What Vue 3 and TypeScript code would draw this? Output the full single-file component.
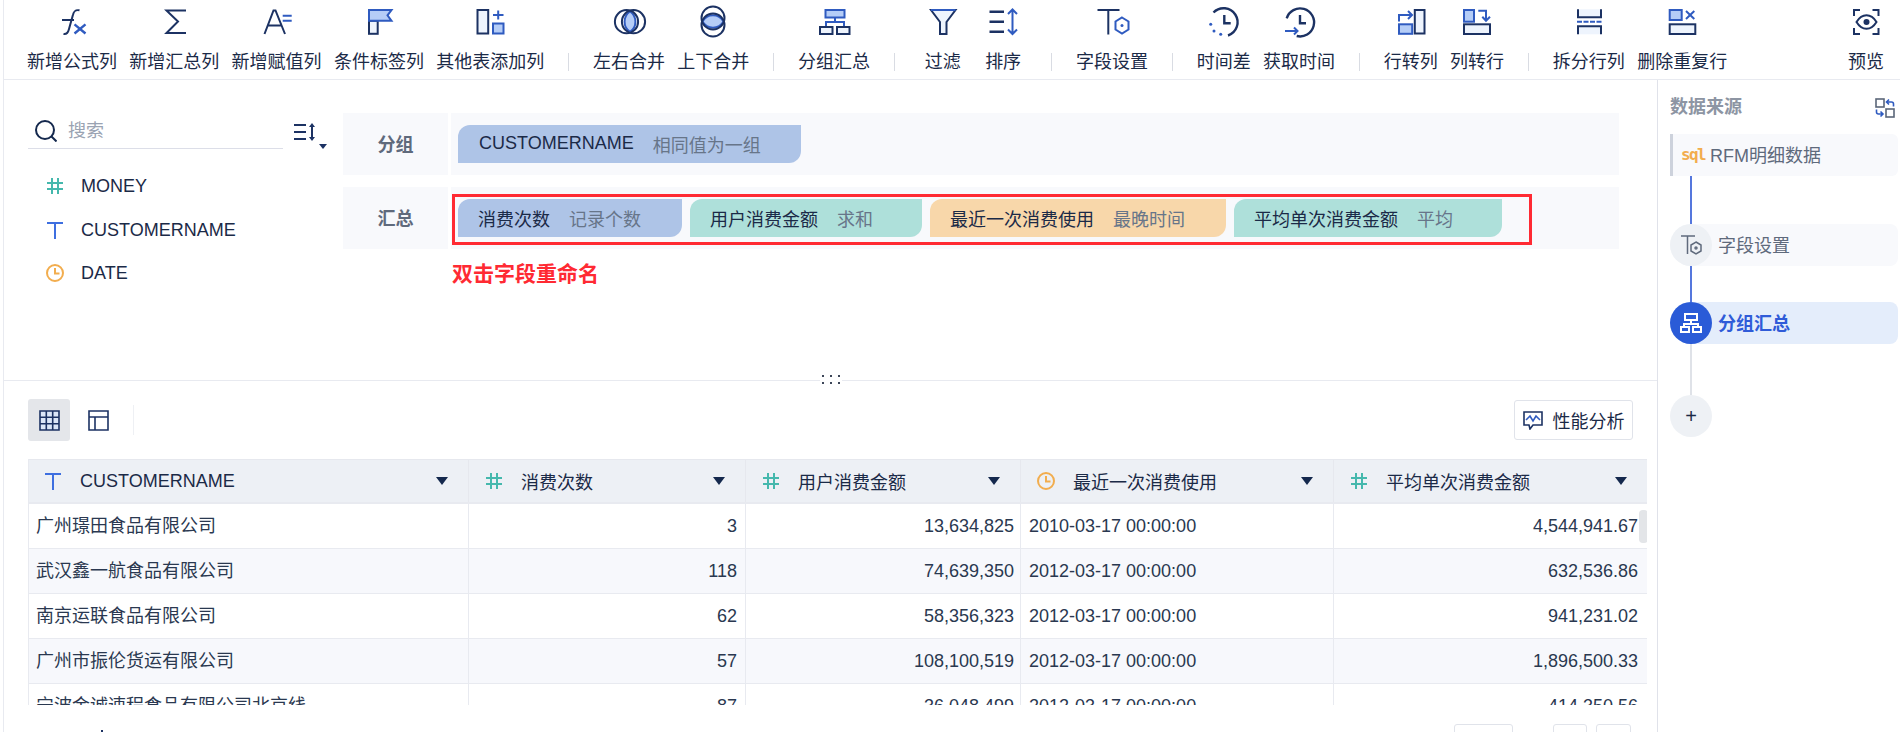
<script setup lang="ts">
interface Tool { label: string; icon: string; pad?: boolean }
type Entry = Tool | 'sep'
const tools: Entry[] = [
  { label: '新增公式列', icon: 'fx' }, { label: '新增汇总列', icon: 'sum' }, { label: '新增赋值列', icon: 'assign' },
  { label: '条件标签列', icon: 'flag' }, { label: '其他表添加列', icon: 'addcol' }, 'sep',
  { label: '左右合并', icon: 'lr' }, { label: '上下合并', icon: 'ud' }, 'sep',
  { label: '分组汇总', icon: 'group' }, 'sep',
  { label: '过滤', icon: 'filter', pad: true }, { label: '排序', icon: 'sort', pad: true }, 'sep',
  { label: '字段设置', icon: 'field' }, 'sep',
  { label: '时间差', icon: 'tdiff' }, { label: '获取时间', icon: 'tget' }, 'sep',
  { label: '行转列', icon: 'r2c' }, { label: '列转行', icon: 'c2r' }, 'sep',
  { label: '拆分行列', icon: 'split' }, { label: '删除重复行', icon: 'dedup' },
]
const isTool = (e: Entry): e is Tool => e !== 'sep'
const fields = [
  { t: 'num', n: 'MONEY' }, { t: 'txt', n: 'CUSTOMERNAME' }, { t: 'time', n: 'DATE' },
]
const pills = [
  { a: '消费次数', b: '记录个数', c: 'blue' }, { a: '用户消费金额', b: '求和', c: 'green' },
  { a: '最近一次消费使用', b: '最晚时间', c: 'orange' }, { a: '平均单次消费金额', b: '平均', c: 'green' },
]
const cols = [
  { t: 'txt', n: 'CUSTOMERNAME', w: 440 }, { t: 'num', n: '消费次数', w: 277 }, { t: 'num', n: '用户消费金额', w: 275 },
  { t: 'time', n: '最近一次消费使用', w: 313 }, { t: 'num', n: '平均单次消费金额', w: 314 },
]
const rows = [
  ['广州璟田食品有限公司', '3', '13,634,825', '2010-03-17 00:00:00', '4,544,941.67'],
  ['武汉鑫一航食品有限公司', '118', '74,639,350', '2012-03-17 00:00:00', '632,536.86'],
  ['南京运联食品有限公司', '62', '58,356,323', '2012-03-17 00:00:00', '941,231.02'],
  ['广州市振伦货运有限公司', '57', '108,100,519', '2012-03-17 00:00:00', '1,896,500.33'],
  ['宁波金诚速程食品有限公司北京线', '87', '36,048,499', '2012-03-17 00:00:00', '414,350.56'],
]
</script>

<template>
  <div class="page">
    <header class="toolbar">
      <template v-for="(e, i) in tools" :key="i">
        <div v-if="!isTool(e)" class="sep"></div>
        <div v-else class="tool" :class="{ pad: e.pad }">
          <svg class="ticon" viewBox="0 0 36 36" fill="none" stroke="#1c3263" stroke-width="2">
            <template v-if="e.icon === 'fx'">
              <path d="M25.5 6.3c-4-.8-5.6.5-6.6 4.7L15 25c-1 4-2.5 5.500-5.500 5" /><path d="M8 16h12" /><path d="M20.500 20.300l11 9.200M31.500 20.300l-11 9.200" stroke="#2f5bc0" stroke-width="2.400" />
            </template>
            <template v-else-if="e.icon === 'sum'">
              <path d="M30 6.500H10.500l11.500 11-11.500 11.500H30" />
            </template>
            <template v-else-if="e.icon === 'assign'">
              <path d="M5.500 30L14.500 6.500h2L26 30M9 21.500h13.500" /><path d="M23.700 11.700h9M23.700 16.700h9" stroke="#2f5bc0" />
            </template>
            <template v-else-if="e.icon === 'flag'">
              <rect x="8" y="16.800" width="8.700" height="13" fill="#eef4fd" /><path d="M8 6h22.500l-4 5.300 4 5.500H8z" fill="#b5cdf7" stroke="#2f5bc0" />
            </template>
            <template v-else-if="e.icon === 'addcol'">
              <rect x="5.500" y="6" width="10.700" height="23.500" fill="#eef4fd" /><rect x="21" y="19.500" width="10.500" height="10" fill="#b5cdf7" stroke="#2f5bc0" /><path d="M26.200 6.500v9M21 11h10.500" stroke="#2f5bc0" />
            </template>
            <template v-else-if="e.icon === 'lr'">
              <path d="M19 7.500a12.300 12.300 0 0 1 0 20.400 12.300 12.300 0 0 1 0-20.400z" fill="#b5cdf7" stroke="#2f5bc0" /><circle cx="15.500" cy="17.700" r="11.600" /><circle cx="22.500" cy="17.700" r="11.600" />
            </template>
            <template v-else-if="e.icon === 'ud'">
              <path d="M7.500 17.500a12 12 0 0 1 21 0 12 12 0 0 1-21 0z" fill="#b5cdf7" stroke="#2f5bc0" /><circle cx="18" cy="14" r="11.500" /><circle cx="18" cy="21" r="11.500" />
            </template>
            <template v-else-if="e.icon === 'group'">
              <rect x="9.500" y="6" width="19" height="7.500" fill="#b5cdf7" stroke="#2f5bc0" /><path d="M19 13.500v4.500M10 23v-5h18v5" stroke="#2f5bc0" /><rect x="4" y="23" width="12.500" height="7" fill="#eef4fd" /><rect x="21" y="23" width="12.500" height="7" fill="#eef4fd" />
            </template>
            <template v-else-if="e.icon === 'filter'">
              <path d="M6 6h24.500L21.500 18v12h-6.500V18z" fill="#eef4fd" /><path d="M6 6h24.500" stroke="#2f5bc0" />
            </template>
            <template v-else-if="e.icon === 'sort'">
              <path d="M4.500 7.700h14.500M4.500 17.700h14.500M4.500 27.700h14.500" stroke-width="2.400" /><path d="M27.500 5.500v24.500M23 10l4.500-4.500L32 10M23 25.500l4.500 4.500 4.500-4.500" stroke="#2f5bc0" />
            </template>
            <template v-else-if="e.icon === 'field'">
              <path d="M3.500 6h22M14.300 6v24.500" /><path d="M28 13.500l6.500 4v8l-6.500 4-6.500-4v-8z" stroke="#2f5bc0" /><circle cx="28" cy="21.500" r="1.500" fill="#2f5bc0" stroke="none" />
            </template>
            <template v-else-if="e.icon === 'tdiff'">
              <path d="M7.500 8.500A14 14 0 1 1 22 31.500" stroke-width="2.400" /><path d="M18.300 11v8.300h6.400" stroke-width="2.400" /><circle cx="4.700" cy="20.300" r="1.500" fill="#2f5bc0" stroke="none" /><circle cx="8" cy="27" r="1.500" fill="#2f5bc0" stroke="none" /><circle cx="14.700" cy="30.300" r="1.500" fill="#2f5bc0" stroke="none" />
            </template>
            <template v-else-if="e.icon === 'tget'">
              <path d="M5.700 14.300A14 14 0 1 1 15.700 32" stroke-width="2.400" /><path d="M19 11v8.300h6" stroke-width="2.400" /><path d="M4 27h12.300M13 23.500l3.500 3.500-3.500 3.500" stroke="#2f5bc0" />
            </template>
            <template v-else-if="e.icon === 'r2c'">
              <rect x="21.800" y="6" width="9.700" height="23.500" fill="#eef4fd" /><rect x="6" y="20.300" width="13.200" height="9.500" fill="#b5cdf7" stroke="#2f5bc0" /><path d="M6 17.500V11h13M15 7l4 4-4 4" stroke="#2f5bc0" />
            </template>
            <template v-else-if="e.icon === 'c2r'">
              <rect x="5" y="20.300" width="26" height="9.700" fill="#eef4fd" /><rect x="5" y="6" width="10" height="11.700" fill="#b5cdf7" stroke="#2f5bc0" /><path d="M19.300 6.700H27v10M23.300 12.700l3.700 4 4-4" stroke="#2f5bc0" />
            </template>
            <template v-else-if="e.icon === 'split'">
              <path d="M7 5.300v8h23v-8" fill="#eef4fd" /><path d="M7 30.300v-8h23v8" fill="#eef4fd" /><path d="M6 17.700h25" stroke="#2f5bc0" stroke-dasharray="5 1.500" />
            </template>
            <template v-else-if="e.icon === 'dedup'">
              <rect x="5.700" y="6" width="12" height="10" fill="#b5cdf7" stroke="#2f5bc0" /><path d="M22 7l8.300 8M30.300 7L22 15" stroke="#2f5bc0" /><rect x="5.700" y="20.300" width="25.600" height="9.700" fill="#eef4fd" />
            </template>
          </svg>
          <span>{{ e.label }}</span>
        </div>
      </template>
      <div class="tool preview">
        <svg class="ticon" viewBox="0 0 36 36" fill="none" stroke="#1c3263" stroke-width="2">
          <path d="M6 12V6h6M24.500 6h6v6M30.500 24v6h-6M12 30H6v-6" /><path d="M8.500 18c5.500-9 14.500-9 20 0-5.500 9-14.500 9-20 0z" /><circle cx="18.500" cy="18" r="3" fill="#1c3263" stroke="none" />
        </svg>
        <span>预览</span>
      </div>
    </header>

    <div class="body">
      <main class="main">
        <section class="config">
          <aside class="fields">
            <div class="search-row">
              <div class="search">
                <svg class="search-ic" viewBox="0 0 22 22" fill="none" stroke="#14284d" stroke-width="2"><circle cx="10" cy="10" r="9" /><path d="M16.500 16.500l5 5" /></svg>
                <span>搜索</span>
              </div>
              <div class="sortbtn">
                <svg width="22" height="20" viewBox="0 0 22 20" fill="none" stroke="#1c3263" stroke-width="2"><path d="M0 3h12M0 10h12M0 17h12" /><path d="M18 3v14" /><path d="M15 5l3-4 3 4zM15 15l3 4 3-4z" fill="#1c3263" stroke="none" /></svg>
                <i class="mini-caret"></i>
              </div>
            </div>
            <div v-for="f in fields" :key="f.n" class="field">
              <svg class="type" viewBox="0 0 18 18" fill="none" stroke-width="2">
                <path v-if="f.t === 'num'" d="M6 1v16M12 1v16M1 6h16M1 12h16" stroke="#45b8ad" />
                <path v-else-if="f.t === 'txt'" d="M1 2h16M9 2v16" stroke="#3e6fe0" />
                <g v-else stroke="#f2ad4e"><circle cx="9" cy="9" r="8" /><path d="M9 4v5.500h4.500" /></g>
              </svg>
              <span>{{ f.n }}</span>
            </div>
          </aside>
          <div class="zones">
            <div class="zone">
              <div class="zlabel">分组</div>
              <div class="zcell">
                <div class="pill blue latin"><span class="pa">CUSTOMERNAME</span><span class="pb">相同值为一组</span></div>
              </div>
            </div>
            <div class="zone second">
              <div class="zlabel">汇总</div>
              <div class="zcell">
                <div v-for="p in pills" :key="p.a" class="pill" :class="p.c"><span class="pa">{{ p.a }}</span><span class="pb">{{ p.b }}</span></div>
                <div class="redbox"></div>
              </div>
            </div>
            <p class="hint">双击字段重命名</p>
          </div>
        </section>

        <section class="data">
          <div class="handle"><i v-for="n in 6" :key="n"></i></div>
          <div class="dbar">
            <div class="vbtn on">
              <svg width="21" height="21" viewBox="0 0 21 21" fill="#dbe6f7" stroke="#1c3263" stroke-width="1.600"><path d="M1 1h19v19H1zM7.300 1v19M13.700 1v19M1 7.300h19M1 13.700h19" /></svg>
            </div>
            <div class="vbtn">
              <svg width="21" height="21" viewBox="0 0 21 21" fill="none" stroke="#1c3263" stroke-width="1.600"><path d="M1 1h19v19H1zM1 7h19M7 7v13" /></svg>
            </div>
            <div class="vsep"></div>
            <div class="perf">
              <svg width="20" height="19" viewBox="0 0 20 19" fill="none" stroke="#1c3263" stroke-width="1.600"><path d="M1 1h18v13h-9l-3 4-1-4H1z" /><path d="M3 9l4-4 3 5 3-5 4 4" stroke="#2f5bc0" /></svg>
              <span>性能分析</span>
            </div>
          </div>
          <div class="tablewrap">
            <div class="thead">
              <div v-for="c in cols" :key="c.n" class="th" :style="{ width: c.w + 'px' }">
                <svg class="type" viewBox="0 0 18 18" fill="none" stroke-width="2">
                  <path v-if="c.t === 'num'" d="M6 1v16M12 1v16M1 6h16M1 12h16" stroke="#45b8ad" />
                  <path v-else-if="c.t === 'txt'" d="M1 2h16M9 2v16" stroke="#3e6fe0" />
                  <g v-else stroke="#f2ad4e"><circle cx="9" cy="9" r="8" /><path d="M9 4v5.500h4.500" /></g>
                </svg>
                <span class="thtext">{{ c.n }}</span>
                <i class="caret"></i>
              </div>
            </div>
            <div v-for="(r, ri) in rows" :key="ri" class="tr" :class="{ alt: ri % 2 === 1 }">
              <div v-for="(v, ci) in r" :key="ci" class="td" :class="{ right: ci === 1 || ci === 2 || ci === 4 }" :style="{ width: cols[ci].w + 'px' }">{{ v }}</div>
            </div>
            <div class="scrollbar"></div>
          </div>
          <div class="pager">
            <span class="pmark"></span>
            <div class="pbtn w60"></div>
            <div class="pbtn w34 gapl"></div>
            <div class="pbtn w35"></div>
          </div>
        </section>
      </main>

      <aside class="side">
        <div class="stitle">
          <span>数据来源</span>
          <svg width="20" height="20" viewBox="0 0 20 20" fill="none" stroke="#5b6678" stroke-width="1.600"><rect x="1" y="1" width="8" height="8" /><rect x="11" y="11" width="8" height="8" /><path d="M12 4h4.500a2 2 0 0 1 2 2v2.500M14 1.500L11.500 4 14 6.500" stroke="#2f5bc0" /><path d="M1.500 11.500V14a2 2 0 0 0 2 2H8M5.500 13.500L8 16l-2.500 2.500" stroke="#2f5bc0" /></svg>
        </div>
        <div class="step source">
          <span class="sql">sql</span>
          <span>RFM明细数据</span>
        </div>
        <div class="link blue-l h48"></div>
        <div class="step">
          <div class="dot">
            <svg width="22" height="22" viewBox="0 0 22 22" fill="none" stroke="#5f6a7c" stroke-width="1.500"><path d="M1 2h14M7.500 2v18" /><path d="M16 8l5 3v6l-5 3-5-3v-6z" /><circle cx="16" cy="14" r="1" /></svg>
          </div>
          <span class="slabel">字段设置</span>
        </div>
        <div class="link blue-l h36"></div>
        <div class="step active">
          <div class="dot">
            <svg width="22" height="20" viewBox="0 0 22 20" fill="none" stroke="#fff" stroke-width="2"><rect x="5" y="1" width="12" height="6" /><path d="M11 7v4M4 14v-3h14v3" /><rect x="1" y="14" width="8" height="5" /><rect x="13" y="14" width="8" height="5" /></svg>
          </div>
          <span class="slabel">分组汇总</span>
        </div>
        <div class="link gray-l h51"></div>
        <div class="dot plus">+</div>
      </aside>
    </div>
  </div>
</template>

<style>
html, body { margin: 0; padding: 0; background: #fff; overflow: hidden; }
</style>

<style scoped>
.page { width: 1900px; height: 732px; overflow: hidden; display: flex; flex-direction: column; background: #fff; font-family: "Liberation Sans", "Noto Sans CJK SC", sans-serif; font-size: 18px; color: #1b2a47; }
.toolbar { height: 79px; flex: none; display: flex; align-items: flex-start; gap: 12.3px; padding: 0 16px 0 23px; margin-left: 3px; border-left: 1px solid #e8eaf0; border-bottom: 1px solid #e8eaf0; }
.tool { display: flex; flex-direction: column; align-items: center; white-space: nowrap; line-height: 22px; padding-top: 4px; }
.tool.pad { padding-left: 6px; padding-right: 6px; }
.tool.preview { margin-left: auto; }
.ticon { width: 36px; height: 36px; display: block; margin-bottom: 11px; flex: none; }
.sep { width: 1px; height: 18px; margin: 53px 11.6px 0; background: #d9dce3; flex: none; }
.body { flex: 1; display: flex; min-height: 0; }
.main { width: 1653px; margin-left: 3px; border-left: 1px solid #e8eaf0; border-right: 1px solid #e0e2ea; flex: none; display: flex; flex-direction: column; }
.config { height: 301px; flex: none; display: flex; border-bottom: 1px solid #e8eaf0; box-sizing: border-box; }
.fields { width: 339px; flex: none; padding: 33px 0 0 24px; box-sizing: border-box; }
.search-row { display: flex; }
.search { width: 255px; height: 36px; border-bottom: 1px solid #dcdee8; display: flex; align-items: flex-start; padding-left: 7px; box-sizing: border-box; color: #9aa3b2; line-height: 28px; }
.search-ic { width: 22px; height: 22px; margin: 7px 11px 0 0; flex: none; }
.search span { margin-top: 4px; }
.sortbtn { position: relative; margin-left: 11px; padding-top: 9px; }
.mini-caret { position: absolute; left: 25px; top: 31px; border: 4px solid transparent; border-top: 5px solid #1c3263; border-bottom: 0; }
.field { display: flex; align-items: center; height: 43.5px; padding-left: 18px; gap: 17px; line-height: 20px; }
.search-row + .field { margin-top: 15.5px; }
.type { width: 18px; height: 18px; flex: none; }
.zones { flex: 1; padding-top: 33px; padding-right: 38px; min-width: 0; }
.zone { display: flex; gap: 3px; height: 62px; }
.zone.second { margin-top: 12px; }
.zlabel { width: 105px; box-sizing: border-box; padding-bottom: 2px; background: #f8f9fc; flex: none; display: flex; align-items: center; justify-content: center; font-weight: 700; color: #5f6a7c; font-size: 18px; }
.zcell { flex: 1; background: #f8f9fc; display: flex; align-items: flex-start; gap: 8px; padding: 12px 0 0 7px; position: relative; }
.pill { height: 38px; box-sizing: border-box; display: flex; align-items: center; padding: 0 41px 1px 20px; gap: 19px; border-radius: 12px 0 12px 0; white-space: nowrap; }
.pill.latin { padding-left: 21px; padding-right: 40px; }
.pb { color: #677589; min-width: 45px; }
.blue { background: #aec4e7; }
.green { background: #aee0da; }
.pill.green { padding-right: 40px; }
.orange { background: #f8d7aa; }
.redbox { position: absolute; left: 1px; top: 7px; width: 1080px; height: 51px; border: 3px solid #ff2a33; box-sizing: border-box; }
.hint { margin: 12px 0 0 109px; font-size: 21px; line-height: 26px; font-weight: 700; color: #ff2a33; }
.data { flex: 1; position: relative; min-height: 0; padding: 0 9px 0 24px; }
.handle { position: absolute; left: 816px; top: -7px; width: 18px; display: grid; grid-template-columns: repeat(3, 2px); gap: 5px 6px; background: #fff; padding: 1px 2px; }
.handle i { width: 2px; height: 2px; background: #3c4658; }
.dbar { display: flex; align-items: center; padding-top: 18px; height: 42px; }
.vbtn { width: 42px; height: 42px; display: flex; align-items: center; justify-content: center; border-radius: 3px; box-sizing: border-box; }
.vbtn + .vbtn { margin-left: 7px; }
.vbtn.on { background: #e4e6ea; }
.vsep { width: 1px; height: 30px; background: #eef0f4; margin-left: 14px; }
.perf { margin-left: auto; margin-right: 15px; width: 119px; height: 40px; box-sizing: border-box; border: 1px solid #e0e3ea; border-radius: 3px; display: flex; align-items: center; justify-content: center; gap: 10px; }
.tablewrap { position: relative; height: 246px; margin-top: 18px; overflow: hidden; width: 1619px; border-left: 1px solid #e8eaf0; box-sizing: border-box; }
.thead { display: flex; height: 45px; background: #edf0f5; border-top: 1px solid #e6e8ee; border-bottom: 2px solid #e8eaf0; box-sizing: border-box; }
.th { flex: none; display: flex; align-items: center; box-sizing: border-box; padding-left: 16px; padding-right: 20px; border-right: 1px solid #e6e8ee; }
.th:first-child { padding-left: 15px; }
.thtext { margin-left: 18px; flex: 1; white-space: nowrap; }
.caret { border: 6px solid transparent; border-top: 8px solid #14284d; border-bottom: 0; }
.tr { display: flex; height: 45px; border-bottom: 1px solid #e8eaf0; box-sizing: border-box; }
.tr.alt { background: #f7f8fc; }
.td { flex: none; box-sizing: border-box; padding: 0 8px; line-height: 44px; border-right: 1px solid #e8eaf0; white-space: nowrap; color: #2a3850; }
.td:first-child { padding-left: 7px; }
.td:nth-child(3) { padding-right: 6px; }
.td:last-child { padding-right: 9px; }
.td.right { text-align: right; }
.scrollbar { position: absolute; right: -1px; top: 51px; width: 9px; height: 33px; border-radius: 4px; background: #e3e5e8; }
.pager { display: flex; padding: 19px 0 0 0; margin-right: 17px; justify-content: flex-end; gap: 9px; position: relative; }
.pmark { position: absolute; left: 73px; top: 25px; width: 2px; height: 4px; background: #1c3263; }
.pbtn { height: 30px; border: 1px solid #e0e3ea; border-radius: 3px; box-sizing: border-box; }
.w60 { width: 59px; }
.w34 { width: 34px; }
.w35 { width: 35px; }
.gapl { margin-left: 31px; }
.side { flex: 1; padding: 15px 2px 0 12px; display: flex; flex-direction: column; min-width: 0; }
.stitle { height: 25px; display: flex; align-items: center; justify-content: space-between; padding-right: 3px; margin-bottom: 14px; font-weight: 700; color: #8d95a3; line-height: 25px; }
.step { height: 42px; box-sizing: border-box; background: #f8f9fc; display: flex; align-items: center; color: #5f6a7c; flex: none; border-radius: 21px 8px 8px 21px; }
.step.source { border-radius: 0 6px 6px 0; border-left: 3px solid #cdd2dc; padding-left: 8px; padding-bottom: 2px; }
.sql { color: #f2ad4e; margin-right: 9px; font-family: "DejaVu Sans Mono", monospace; font-size: 16px; font-weight: 700; letter-spacing: -1.6px; width: 20px; }
.link { width: 2px; margin-left: 20px; flex: none; }
.blue-l { background: #5577dd; }
.gray-l { background: #dfe2e8; }
.h48 { height: 48px; }
.h36 { height: 36px; }
.h51 { height: 51px; }
.dot { width: 42px; height: 42px; border-radius: 50%; background: #eef1f5; display: flex; align-items: center; justify-content: center; flex: none; }
.slabel { margin-left: 6px; margin-bottom: 2px; }
.step.active { background: #e4edfb; color: #2f5bd8; font-weight: 700; }
.step.active .dot { background: #2a5bd7; }
.plus { color: #1b2a47; font-size: 20px; }
</style>
